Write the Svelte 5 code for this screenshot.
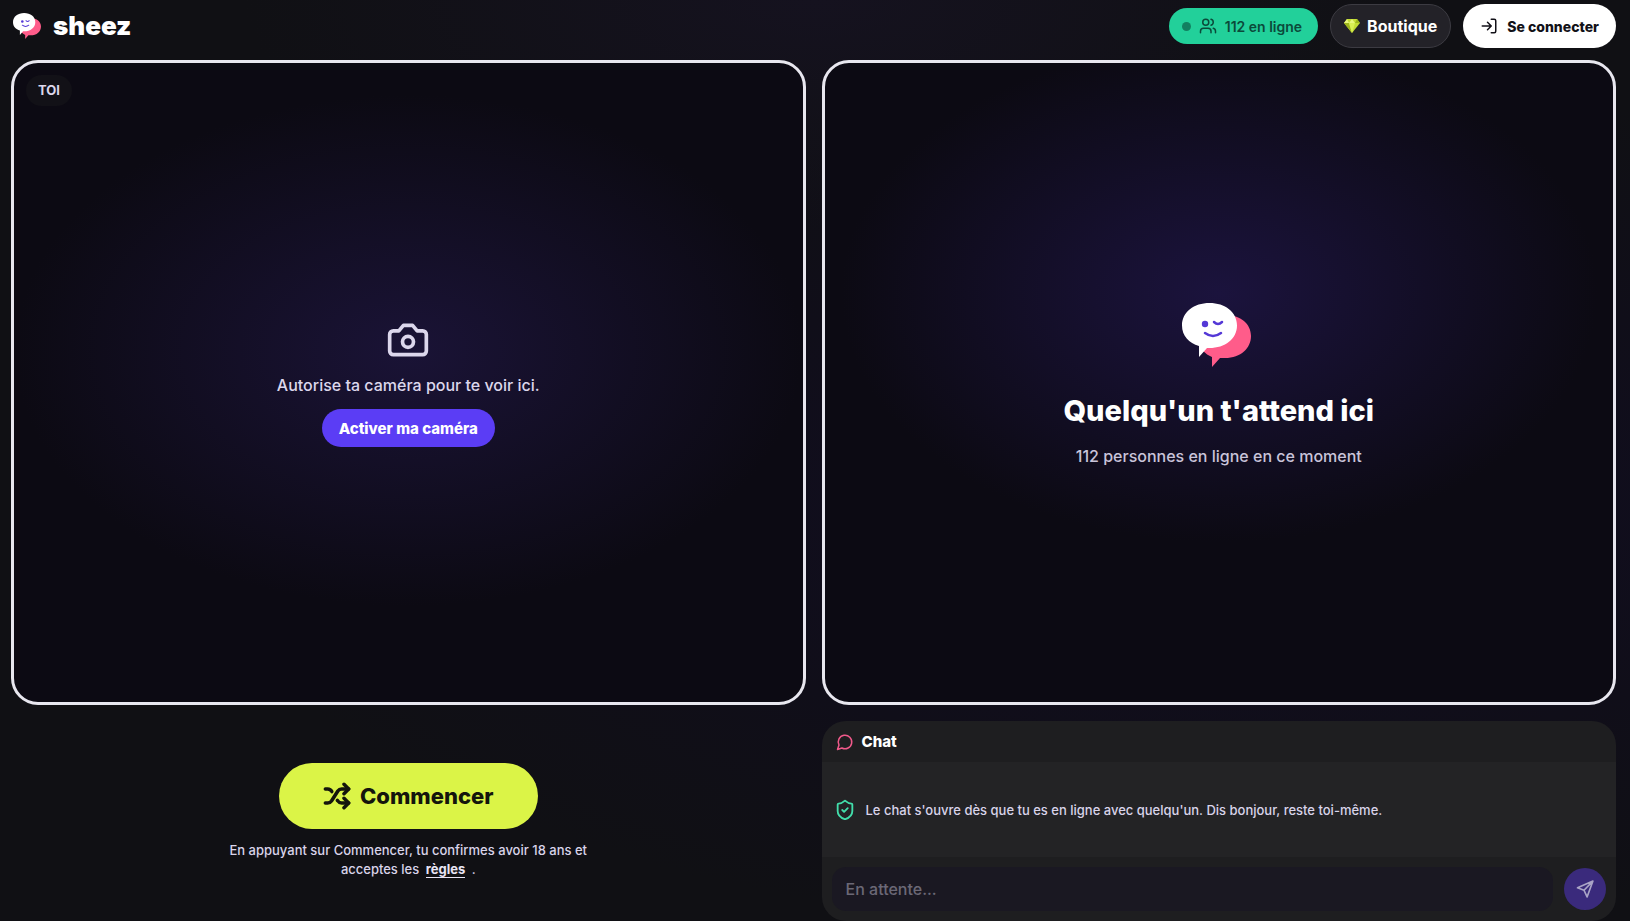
<script>
  let online = 112;
  let message = '';
</script>

{#snippet logo()}
  <svg class="logo" viewBox="0 0 74 64" aria-hidden="true">
    <path fill="#ff5c8a" d="M43 12C59 12 69 21 69 33S59 55 43 55H38L30 64V54C23 51 18 46 18 40C18 24 28 12 43 12Z" />
    <path fill="#fff" d="M27.500 0C43 0 55 9 55 22.500S43 45 27.500 45H25L17 54V43C7 40 0 33 0 22.500C0 9 12 0 27.500 0Z" />
    <circle cx="23" cy="21" r="3.2" fill="#5438d6" />
    <path fill="none" stroke="#5438d6" stroke-width="2.5" stroke-linecap="round" d="M32 19Q36 23 40 19M23 30Q31 36 39 30" />
  </svg>
{/snippet}

<div class="app">
  <header>
    <a class="brand" href="/">
      {@render logo()}
      <span>sheez</span>
    </a>
    <nav>
      <div class="online">
        <i class="dot"></i>
        <svg class="icon" viewBox="0 0 24 24" width="18" height="18">
          <path d="M16 21v-2a4 4 0 0 0-4-4H6a4 4 0 0 0-4 4v2" />
          <circle cx="9" cy="7" r="4" />
          <path d="M22 21v-2a4 4 0 0 0-3-3.87M16 3.13a4 4 0 0 1 0 7.75" />
        </svg>
        <span>{online} en ligne</span>
      </div>
      <button class="shop">
        <svg viewBox="0 0 16 14" width="16" height="14" aria-hidden="true">
          <path fill="#c3dc35" d="M3 0H13L16 4L8 14L0 4Z" />
          <path fill="#e9f77d" d="M3 0L5 4H0ZM8 0L11 4H5Z" />
          <path fill="#9db51c" d="M13 0L11 4H16ZM5 4L8 14L0 4Z" />
          <path fill="#d9ef55" d="M5 4H11L8 14Z" />
        </svg>
        Boutique
      </button>
      <button class="login">
        <svg class="icon" viewBox="0 0 24 24" width="18" height="18">
          <path d="M15 3h4a2 2 0 0 1 2 2v14a2 2 0 0 1-2 2h-4M10 17l5-5-5-5M15 12H3" />
        </svg>
        Se connecter
      </button>
    </nav>
  </header>

  <main>
    <section class="screen self">
      <span class="tag">TOI</span>
      <svg class="icon" viewBox="0 0 24 24" width="44" height="44">
        <path d="M14.5 4h-5L7 7H4a2 2 0 0 0-2 2v9a2 2 0 0 0 2 2h16a2 2 0 0 0 2-2V9a2 2 0 0 0-2-2h-3z" />
        <circle cx="12" cy="13" r="3" />
      </svg>
      <p>Autorise ta caméra pour te voir ici.</p>
      <button class="camera">Activer ma caméra</button>
    </section>

    <section class="screen stranger">
      {@render logo()}
      <h1>Quelqu'un t'attend ici</h1>
      <p>{online} personnes en ligne en ce moment</p>
    </section>

    <section class="start">
      <button class="go">
        <svg class="icon" viewBox="0 0 24 24" width="28" height="28">
          <path d="m18 14 4 4-4 4M18 2l4 4-4 4" />
          <path d="M2 18h1.97a4 4 0 0 0 3.3-1.7l5.46-8.6a4 4 0 0 1 3.3-1.7H22" />
          <path d="M2 6h1.97a4 4 0 0 1 3.6 2.2M22 18h-6.04a4 4 0 0 1-3.3-1.8l-.36-.45" />
        </svg>
        Commencer
      </button>
      <p>En appuyant sur Commencer, tu confirmes avoir 18 ans et acceptes les <a href="/regles">règles</a> .</p>
    </section>

    <section class="chat">
      <h2>
        <svg class="icon" viewBox="0 0 24 24" width="18" height="18">
          <path d="M7.9 20A9 9 0 1 0 4 16.1L2 22Z" />
        </svg>
        Chat
      </h2>
      <div class="messages">
        <svg class="icon" viewBox="0 0 24 24" width="22" height="22">
          <path d="M20 13c0 5-3.5 7.5-7.66 8.95a1 1 0 0 1-.67-.01C7.5 20.5 4 18 4 13V6a1 1 0 0 1 1-1c2 0 4.5-1.2 6.24-2.72a1.17 1.17 0 0 1 1.52 0C14.51 3.81 17 5 19 5a1 1 0 0 1 1 1z" />
          <path d="m9 12 2 2 4-4" />
        </svg>
        <p>Le chat s'ouvre dès que tu es en ligne avec quelqu'un. Dis bonjour, reste toi-même.</p>
      </div>
      <form on:submit|preventDefault>
        <input type="text" aria-label="Message" placeholder="En attente..." bind:value={message} disabled />
        <button class="send" aria-label="Envoyer" disabled>
          <svg class="icon" viewBox="0 0 24 24" width="20" height="20">
            <path d="M3 10.5 21.5 2.5 14.5 21.5 10.8 13.5ZM10.8 13.5 21.5 2.5" />
          </svg>
        </button>
      </form>
    </section>
  </main>
</div>

<style>
  :global(body) {
    background: #100f14;
  }

  .app {
    box-sizing: border-box;
    display: flex;
    flex-direction: column;
    min-height: 100vh;
    padding: 4px 14px 0 11px;
    color: #fff;
    font-family: Inter, "Liberation Sans", sans-serif;
    font-size: 16px;
    background:
      radial-gradient(ellipse 35% 25% at 50% 0%, #15121f 0%, transparent 100%),
      radial-gradient(ellipse at 75% 55%, #110d22 0%, #100e19 35%, #101014 60%);
  }

  button,
  input {
    font-family: inherit;
    border: none;
  }

  button {
    display: flex;
    align-items: center;
    justify-content: center;
    cursor: pointer;
    border-radius: 99px;
  }

  p,
  h1,
  h2 {
    margin: 0;
  }

  .icon {
    flex: none;
    fill: none;
    stroke: currentColor;
    stroke-width: 2;
    stroke-linecap: round;
    stroke-linejoin: round;
  }

  header {
    display: flex;
    align-items: center;
    justify-content: space-between;
    padding-bottom: 12px;
  }

  .brand {
    display: flex;
    align-items: center;
    gap: 10px;
    padding-left: 2px;
    color: #fff;
    font-size: 26px;
    font-weight: 900;
    line-height: 32px;
    text-decoration: none;
  }

  .brand .logo {
    width: 30px;
    height: 26px;
  }

  nav {
    display: flex;
    align-items: center;
    gap: 12px;
  }

  .online {
    display: flex;
    align-items: center;
    gap: 8px;
    height: 36px;
    padding: 0 16px 0 13px;
    border-radius: 18px;
    background: #22d09a;
    color: #0b4a3a;
    font-size: 14px;
    font-weight: 600;
  }

  .dot {
    width: 9px;
    height: 9px;
    border-radius: 50%;
    background: #128060;
  }

  .shop {
    gap: 7px;
    height: 44px;
    padding: 0 13px;
    border: 1px solid #3c3b42;
    background: #232228;
    color: #fff;
    font-size: 16px;
    font-weight: 700;
  }

  .login {
    gap: 9px;
    height: 44px;
    padding: 0 17px;
    background: #fff;
    color: #121118;
    font-size: 14px;
    font-weight: 800;
  }

  main {
    flex: 1;
    display: grid;
    grid-template-columns: 1fr 1fr;
    grid-template-rows: 1fr auto;
    gap: 16px;
  }

  .screen {
    position: relative;
    display: flex;
    flex-direction: column;
    align-items: center;
    justify-content: center;
    border: 3px solid #e8e7ef;
    border-radius: 27px;
    background: radial-gradient(ellipse 50% 40% at 50% 45%, #1a1336 0%, #0c0a13 100%);
    font-weight: 500;
    text-align: center;
  }

  .stranger {
    padding-top: 6px;
    background: radial-gradient(ellipse 48% 39% at 50% 36%, #1b133d 0%, #0c0a13 100%);
  }

  .tag {
    position: absolute;
    top: 12px;
    left: 12px;
    padding: 0 12px;
    border-radius: 16px;
    background: #121117;
    font-size: 13px;
    font-weight: 700;
    line-height: 31px;
  }

  .self {
    color: #dcd7ec;
  }

  .self p {
    margin: 12px 0;
    line-height: 23px;
  }

  .camera {
    height: 38px;
    padding: 0 17px;
    background: #5b3df5;
    color: #fff;
    font-size: 15px;
    font-weight: 800;
  }

  .stranger .logo {
    width: 74px;
    height: 64px;
  }

  .stranger h1 {
    margin: 25px 0 14px;
    font-size: 29px;
    font-weight: 800;
    line-height: 38px;
  }

  .stranger p {
    color: #c9c4da;
    line-height: 24px;
  }

  .start {
    display: flex;
    flex-direction: column;
    align-items: center;
    justify-content: center;
    gap: 12px;
  }

  .go {
    gap: 9px;
    height: 66px;
    padding: 0 44px;
    background: #dbf447;
    color: #14150c;
    font-size: 22px;
    font-weight: 800;
  }

  .go .icon {
    stroke-width: 3;
  }

  .start p {
    max-width: 368px;
    color: #d9d4ea;
    font-size: 13px;
    font-weight: 500;
    line-height: 19px;
    text-align: center;
  }

  .start a {
    display: inline-block;
    margin: 0 3px;
    border-bottom: 1px solid #e8e4f4;
    color: #e8e4f4;
    font-weight: 700;
    line-height: 16px;
    text-decoration: none;
  }

  .chat {
    overflow: hidden;
    border-radius: 24px;
    background: #1e1e20;
  }

  .chat h2 {
    display: flex;
    align-items: center;
    gap: 8px;
    height: 41px;
    padding: 0 14px;
    font-size: 15px;
    font-weight: 800;
  }

  .chat h2 .icon {
    color: #f0598a;
  }

  .messages {
    display: flex;
    align-items: center;
    gap: 10px;
    min-height: 95px;
    padding: 0 12px;
    background: #232325;
    color: #d9d4ea;
    font-size: 13px;
    font-weight: 500;
  }

  .messages .icon {
    color: #42deab;
  }

  form {
    display: flex;
    align-items: center;
    gap: 11px;
    padding: 10px;
  }

  input {
    flex: 1;
    min-width: 0;
    box-sizing: border-box;
    height: 44px;
    padding: 0 14px;
    border-radius: 14px;
    background: #1a1822;
    color: #fff;
    font-size: 16px;
    font-weight: 500;
  }

  input::placeholder {
    color: #6b6876;
  }

  .send {
    width: 42px;
    height: 42px;
    padding: 0;
    background: #3a2a7c;
    color: #aaa4c6;
  }
</style>
